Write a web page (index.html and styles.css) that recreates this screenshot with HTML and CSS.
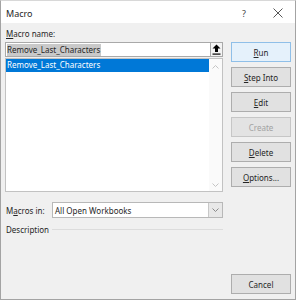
FILE: index.html
```html
<!DOCTYPE html>
<html>
<head>
<meta charset="utf-8">
<link rel="stylesheet" href="styles.css">
</head>
<body>
<div class="window">
  <div class="titlebar">
    <span class="title">Macro</span>
    <span class="help">?</span>
    <span class="close">
      <svg width="10" height="10" viewBox="0 0 10 10"><path d="M0.5 0.5 L9.5 9.5 M9.5 0.5 L0.5 9.5" stroke="#444" stroke-width="0.9" fill="none"/></svg>
    </span>
  </div>
  <div class="body">
    <div class="main">
      <div class="left">
        <div class="label"><u>M</u>acro name:</div>
        <div class="namebox">
          <div class="field"><span class="hl">Remove_Last_Characters</span></div>
          <div class="upbtn">
            <svg width="9" height="11" viewBox="0 0 9 11"><path d="M4.5 0.5 L8.5 4.5 L6 4.5 L6 8 L3 8 L3 4.5 L0.5 4.5 Z" fill="#000"/><rect x="0.5" y="9.5" width="8" height="1.2" fill="#000"/></svg>
          </div>
        </div>
        <div class="list">
          <div class="items">
            <div class="item selected">Remove_Last_Characters</div>
          </div>
          <div class="scroll">
            <svg width="7" height="4" viewBox="0 0 7 4"><path d="M0.5 3.5 L3.5 0.5 L6.5 3.5" stroke="#c4c4c4" fill="none"/></svg>
            <svg width="7" height="4" viewBox="0 0 7 4"><path d="M0.5 0.5 L3.5 3.5 L6.5 0.5" stroke="#c4c4c4" fill="none"/></svg>
          </div>
        </div>
        <div class="inrow">
          <span class="label2">M<u>a</u>cros in:</span>
          <div class="select">
            <span class="seltext">All Open Workbooks</span>
            <span class="drop">
              <svg width="7" height="4" viewBox="0 0 7 4"><path d="M0.5 0.5 L3.5 3.5 L6.5 0.5" stroke="#8a8a8a" fill="none"/></svg>
            </span>
          </div>
        </div>
        <div class="descrow">
          <span>Description</span>
          <span class="rule"></span>
        </div>
      </div>
      <div class="buttons">
        <div class="btn default"><u>R</u>un</div>
        <div class="btn"><u>S</u>tep Into</div>
        <div class="btn"><u>E</u>dit</div>
        <div class="btn disabled">Create</div>
        <div class="btn"><u>D</u>elete</div>
        <div class="btn"><u>O</u>ptions...</div>
      </div>
    </div>
    <div class="footer">
      <div class="btn">Cancel</div>
    </div>
  </div>
</div>
</body>
</html>
```

FILE: styles.css
```css
* { box-sizing: border-box; }
html, body {
  margin: 0;
  padding: 0;
  background: #ffffff;
}
body {
  font-family: "Noto Sans", "Open Sans", sans-serif;
  font-size: 8px;
  color: #262626;
}
.window {
  width: 296px;
  height: 300px;
  border: 1px solid #a3a3a3;
  border-top-color: #d8d8d8;
  display: flex;
  flex-direction: column;
  background: #f0f0f0;
}
.titlebar {
  height: 22px;
  background: #ffffff;
  display: flex;
  align-items: center;
  padding-left: 5px;
  padding-top: 2px;
}
.title {
  font-size: 9px;
  flex: 1;
}
.help {
  font-size: 9px;
  color: #444;
  margin-right: 27px;
}
.close {
  display: flex;
  margin-right: 12px;
}
.body {
  flex: 1;
  display: flex;
  flex-direction: column;
  padding: 5px 4px 5px 4px;
}
.main {
  display: flex;
  gap: 8px;
}
.left {
  width: 218px;
  display: flex;
  flex-direction: column;
}
.label {
  height: 14px;
  line-height: 12px;
  padding-left: 1px;
}
.namebox {
  display: flex;
  height: 15px;
}
.field {
  flex: 1;
  background: #fff;
  border: 1px solid #a9a9a9;
  border-right: none;
  display: flex;
  align-items: center;
  padding-left: 1px;
}
.hl {
  background: #c9c9c9;
  line-height: 12px;
  padding: 0 1px 0 0;
}
.upbtn {
  width: 13px;
  border: 1px solid #a9a9a9;
  background: #f3f3f3;
  display: flex;
  align-items: center;
  justify-content: center;
}
.list {
  margin-top: 1px;
  height: 134px;
  background: #fff;
  border: 1px solid #c2c2c2;
  display: flex;
}
.items {
  flex: 1;
}
.item {
  height: 13px;
  line-height: 12px;
  padding-left: 1px;
}
.item.selected {
  background: #0078d7;
  color: #fff;
}
.scroll {
  width: 13px;
  background: #fafafa;
  display: flex;
  flex-direction: column;
  justify-content: space-between;
  align-items: center;
  padding: 6px 0 4px;
}
.inrow {
  margin-top: 10px;
  display: flex;
  align-items: center;
  height: 16px;
}
.label2 {
  width: 47px;
  padding-left: 1px;
}
.select {
  flex: 1;
  height: 16px;
  background: #fff;
  border: 1px solid #b8b8b8;
  display: flex;
  align-items: center;
}
.seltext {
  flex: 1;
  padding-left: 2px;
}
.drop {
  width: 14px;
  height: 14px;
  background: #e8e8e8;
  border-left: 1px solid #c8c8c8;
  display: flex;
  align-items: center;
  justify-content: center;
}
.descrow {
  margin-top: 5px;
  display: flex;
  align-items: center;
  gap: 3px;
  height: 13px;
  padding-left: 1px;
}
.rule {
  flex: 1;
  height: 1px;
  background: #dcdcdc;
}
.buttons {
  margin-top: 14px;
  display: flex;
  flex-direction: column;
  gap: 5px;
}
.btn {
  width: 60px;
  height: 20px;
  background: #e1e1e1;
  border: 1px solid #adadad;
  display: flex;
  align-items: center;
  justify-content: center;
}
.btn.default {
  background: #e5f1fb;
  border-color: #8fbfe8;
}
.btn.disabled {
  color: #a2a2a2;
  border-color: #c6c6c6;
  background: #e3e3e3;
}
.footer {
  margin-top: auto;
  display: flex;
  justify-content: flex-end;
}
```
